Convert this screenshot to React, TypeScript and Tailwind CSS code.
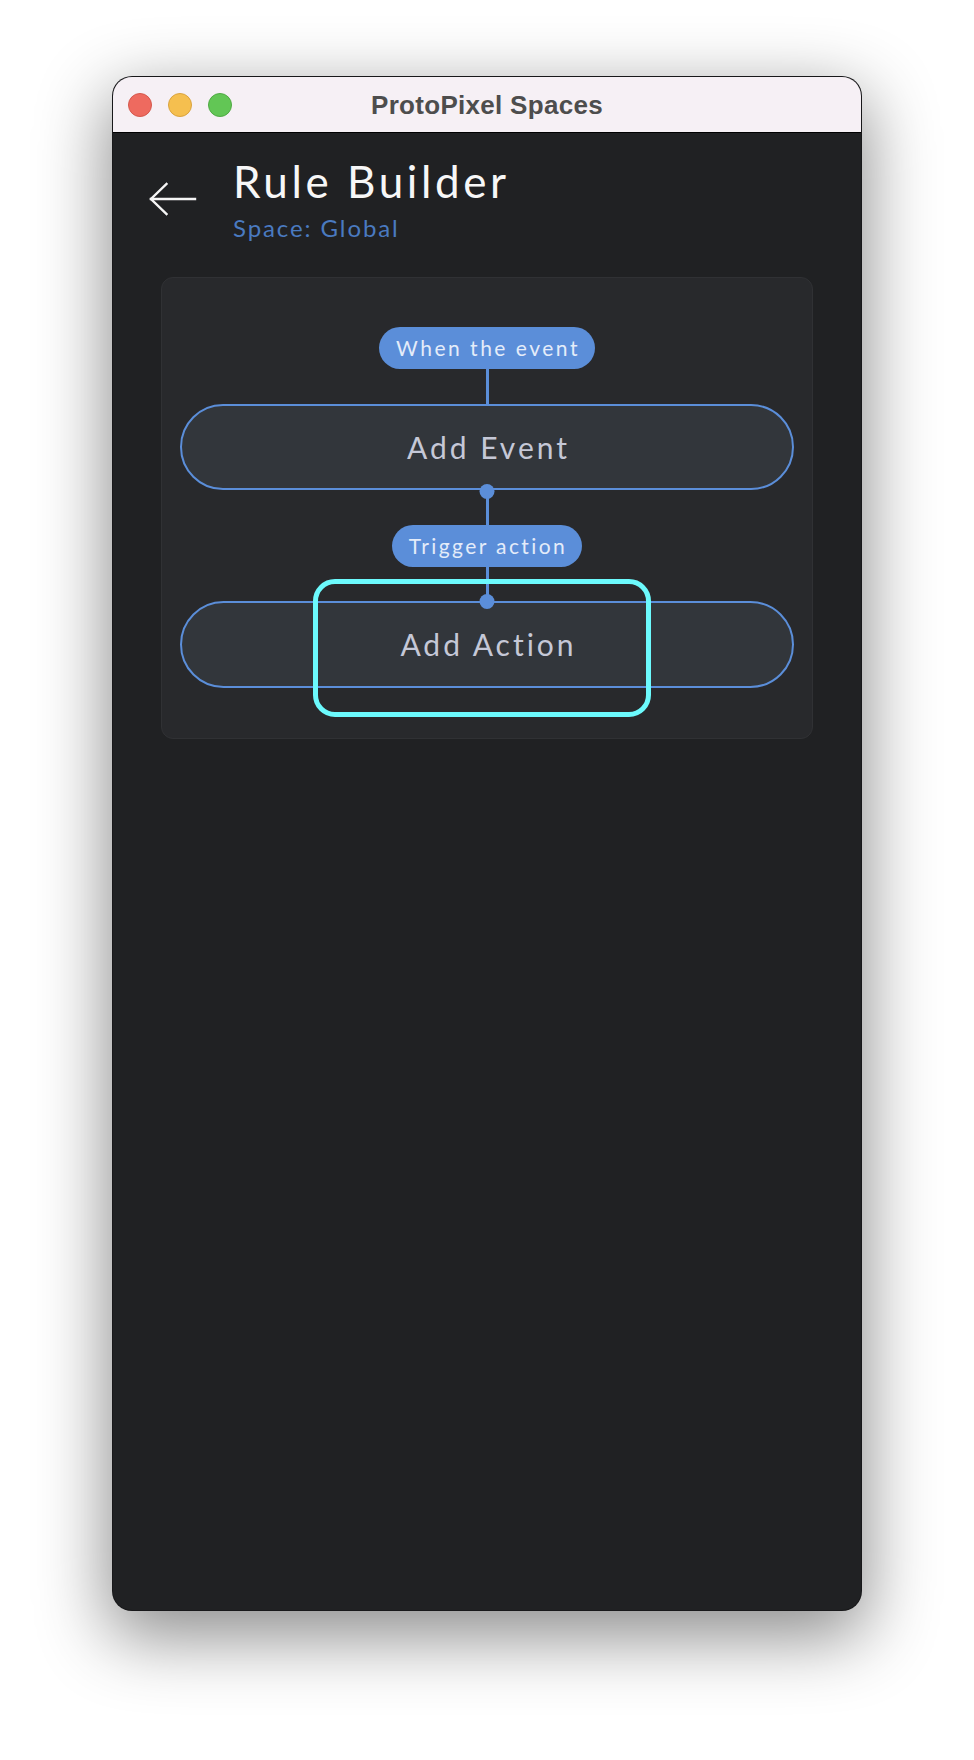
import React from 'react';

const BackArrow: React.FC = () => (
  <svg width="48" height="34" viewBox="0 0 48 34" fill="none" stroke="#f5f5f5" strokeWidth="2.4" strokeLinecap="square">
    <path d="M2 17H46" />
    <path d="M17.5 2L2 17L17.5 32" strokeLinejoin="miter" />
  </svg>
);

const App: React.FC = () => {
  return (
    <div className="h-[1760px] bg-white pt-[76px] font-['Lato',sans-serif]">
      <div className="mx-auto w-[750px] h-[1535px] rounded-[20px] overflow-hidden border border-black/25 bg-[#202123] shadow-[0_22px_70px_4px_rgba(0,0,0,0.45)] flex flex-col">
        {/* title bar */}
        <div className="h-[56px] shrink-0 bg-[#f6f0f5] border-b border-black grid grid-cols-[1fr_auto_1fr] items-center">
          <div className="flex items-center gap-[16px] pl-[15px]">
            <span className="w-[24px] h-[24px] rounded-full bg-[#ee6a5f] border border-[#d4584d]" />
            <span className="w-[24px] h-[24px] rounded-full bg-[#f5bf4f] border border-[#d9a33f]" />
            <span className="w-[24px] h-[24px] rounded-full bg-[#62c655] border border-[#50a944]" />
          </div>
          <div className="font-['Liberation_Sans',Arial,sans-serif] font-bold text-[26px] tracking-[0.3px] text-[#4d4d4d] leading-none">
            ProtoPixel Spaces
          </div>
          <div />
        </div>

        {/* header */}
        <div className="flex pl-[36px] pt-[26px]">
          <div className="w-[84px] pt-[23px]">
            <BackArrow />
          </div>
          <div className="flex flex-col">
            <h1 className="text-[44px] leading-none tracking-[3.6px] text-[#f7f7f7]">Rule Builder</h1>
            <p className="mt-[13px] text-[24px] leading-none tracking-[1.9px] text-[#4a7ac0]">Space: Global</p>
          </div>
        </div>

        {/* rule card */}
        <div className="mt-[37px] ml-[48px] w-[652px] rounded-[12px] bg-[#28292c] border border-[#303134] pt-[49px] pb-[50px] px-[18px] flex flex-col items-center">
          <div className="h-[42px] pl-[17px] pr-[15px] rounded-full bg-[#5b8ed9] flex items-center text-[21px] tracking-[2.5px] text-[#e4ecf9]">
            When the event
          </div>
          <div className="w-[3px] h-[35px] bg-[#5b8ed9]" />
          <div className="relative w-full h-[86px] rounded-full border-2 border-[#5b8ed9] bg-[#32363b] flex items-center justify-center pl-[3px] text-[30px] tracking-[3px] text-[#c5c8d7]">
            Add Event
            <span className="absolute left-1/2 -translate-x-1/2 -bottom-[11px] w-[15px] h-[15px] rounded-full bg-[#5b8ed9]" />
          </div>
          <div className="w-[3px] h-[35px] bg-[#5b8ed9]" />
          <div className="h-[42px] pl-[17px] pr-[15px] rounded-full bg-[#5b8ed9] flex items-center text-[21px] tracking-[2.4px] text-[#e4ecf9]">
            Trigger action
          </div>
          <div className="w-[3px] h-[34px] bg-[#5b8ed9]" />
          <div className="relative w-full h-[87px] rounded-full border-2 border-[#5b8ed9] bg-[#32363b] flex items-center justify-center pl-[3px] text-[30px] tracking-[3px] text-[#c5c8d7]">
            <span className="absolute left-1/2 -translate-x-1/2 -top-[9px] w-[15px] h-[15px] rounded-full bg-[#5b8ed9]" />
            Add Action
            <span className="absolute left-[131px] -top-[24px] w-[338px] h-[138px] rounded-[22px] border-[5px] border-[#6cfafd] pointer-events-none" />
          </div>
        </div>
      </div>
    </div>
  );
};

export default App;
